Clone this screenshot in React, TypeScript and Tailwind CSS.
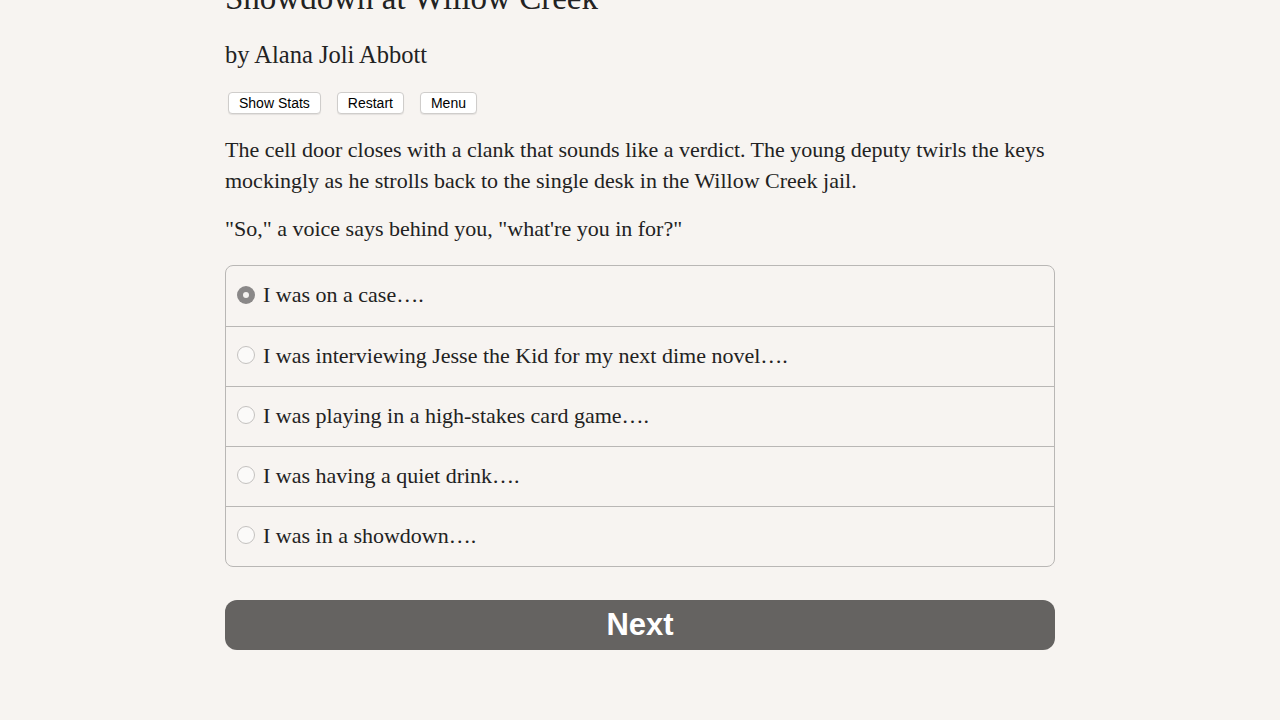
import React from "react";

const choices = [
  "I was on a case….",
  "I was interviewing Jesse the Kid for my next dime novel….",
  "I was playing in a high-stakes card game….",
  "I was having a quiet drink….",
  "I was in a showdown….",
];

function Radio({ checked }: { checked: boolean }) {
  return checked ? (
    <span className="inline-flex h-[18px] w-[18px] shrink-0 items-center justify-center rounded-full bg-[#8a8888]">
      <span className="h-[6px] w-[6px] rounded-full bg-[#f4f2f0]" />
    </span>
  ) : (
    <span className="inline-block h-[18px] w-[18px] shrink-0 rounded-full border border-[#c4c2c0] bg-[#fbfaf9]" />
  );
}

export default function App() {
  return (
    <div className="min-h-[720px] w-full overflow-hidden bg-[#f7f4f1] text-[#222]">
      <div className="mx-auto w-[830px]" style={{ fontFamily: '"Liberation Serif", "Times New Roman", serif' }}>
        <h1 className="mt-[-22px] text-[33px] leading-[40px] font-normal">Showdown at Willow Creek</h1>
        <div className="mt-[22px] text-[24.5px] leading-[30px]">by Alana Joli Abbott</div>
        <div className="mt-[22px] flex gap-[16px] pl-[3px]" style={{ fontFamily: '"Liberation Sans", Arial, sans-serif' }}>
          {["Show Stats", "Restart", "Menu"].map((b) => (
            <button
              key={b}
              className="h-[22px] rounded-[4px] border border-[#cfcdcb] bg-white px-[10px] text-[14px] leading-[20px] text-black shadow-[0_1px_1px_rgba(0,0,0,0.08)]"
            >
              {b}
            </button>
          ))}
        </div>
        <p className="mt-[20px] text-[22px] leading-[31px]">
          The cell door closes with a clank that sounds like a verdict. The young deputy twirls the keys mockingly as he strolls back to the single desk in the Willow Creek jail.
        </p>
        <p className="mt-[17px] text-[22px] leading-[31px]">"So," a voice says behind you, "what're you in for?"</p>
        <div className="mt-[21px] overflow-hidden rounded-[8px] border border-[#b9b7b5]">
          {choices.map((c, i) => (
            <div
              key={c}
              className={`flex h-[60px] items-center gap-[8px] pb-[3px] pl-[11px] text-[22px] ${i > 0 ? "border-t border-[#b9b7b5]" : ""}`}
            >
              <Radio checked={i === 0} />
              <span>{c}</span>
            </div>
          ))}
        </div>
        <button
          className="mt-[33px] flex h-[50px] w-full items-center justify-center rounded-[12px] bg-[#656361] text-[31px] font-bold text-white"
          style={{ fontFamily: '"Liberation Sans", Arial, sans-serif' }}
        >
          Next
        </button>
      </div>
    </div>
  );
}
